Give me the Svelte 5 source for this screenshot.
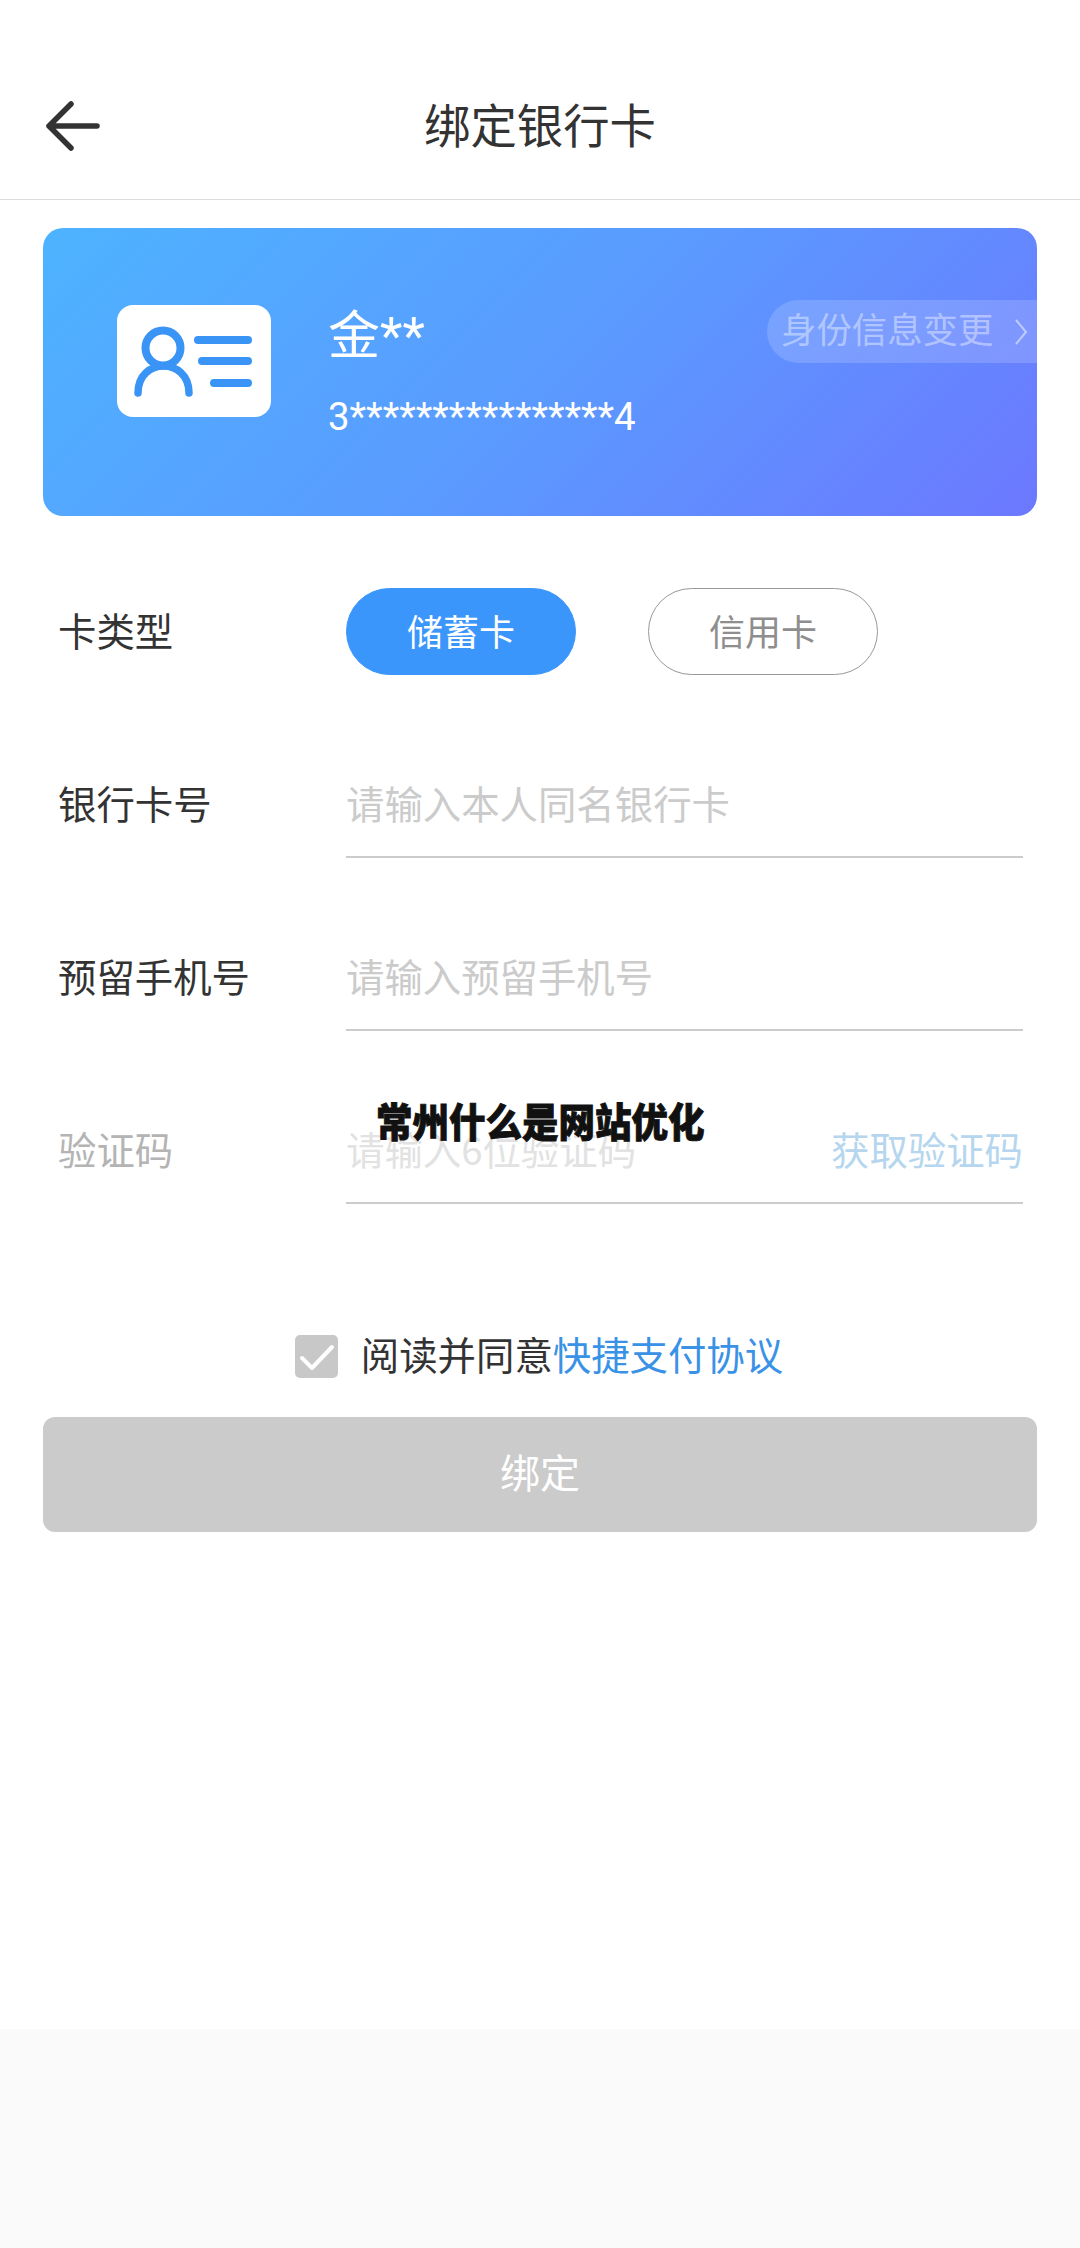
<script>
  const rows = [
    { label: '银行卡号', hint: '请输入本人同名银行卡' },
    { label: '预留手机号', hint: '请输入预留手机号' }
  ];
</script>

<div class="page">
  <header class="nav">
    <svg class="back" viewBox="0 0 56 50" width="56" height="50" aria-hidden="true">
      <path d="M25 3 L3 25 L25 47 M3 25 H51" fill="none" stroke="#333" stroke-width="5.5" stroke-linecap="round" stroke-linejoin="round" />
    </svg>
    <h1>绑定银行卡</h1>
  </header>

  <main class="content">
    <section class="card">
      <div class="id-icon">
        <svg viewBox="0 0 154 112" width="154" height="112" aria-hidden="true">
          <g fill="none" stroke="#3a94f6" stroke-linecap="round">
            <circle cx="46" cy="43" r="17.5" stroke-width="8" />
            <path d="M21 88 C21 52 72 52 72 88" stroke-width="7.5" />
            <path d="M81 35 H131 M85 56 H131 M97 78 H131" stroke-width="8" />
          </g>
        </svg>
      </div>
      <div class="holder">
        <div class="name">金**</div>
        <div class="number">3****************4</div>
      </div>
      <div class="change">
        <span>身份信息变更</span>
        <svg viewBox="0 0 14 28" width="14" height="28" aria-hidden="true">
          <path d="M2 2 L12 14 L2 26" fill="none" stroke="#fff" stroke-opacity=".5" stroke-width="2" />
        </svg>
      </div>
    </section>

    <div class="row type-row">
      <div class="label">卡类型</div>
      <div class="pills">
        <div class="pill active">储蓄卡</div>
        <div class="pill">信用卡</div>
      </div>
    </div>

    {#each rows as row}
      <div class="row">
        <div class="label">{row.label}</div>
        <div class="field"><span class="hint">{row.hint}</span></div>
      </div>
    {/each}

    <div class="row">
      <div class="label faded">验证码</div>
      <div class="field">
        <span class="hint faint">请输入6位验证码</span>
        <span class="get-code">获取验证码</span>
      </div>
    </div>

    <div class="agree">
      <span class="check">
        <svg viewBox="0 0 43 43" width="43" height="43" aria-hidden="true">
          <path d="M7 23 L17 33 L37 12" fill="none" stroke="#fff" stroke-width="4" stroke-linecap="round" stroke-linejoin="round" />
        </svg>
      </span>
      <span class="agree-text">阅读并同意<span class="link">快捷支付协议</span></span>
    </div>

    <button class="submit" type="button">绑定</button>
  </main>

  <div class="spacer"></div>
  <div class="foot"></div>

  <div class="watermark">常州什么是网站优化</div>
</div>

<style>
  :global(body) {
    margin: 0;
    background: #fff;
  }

  .page {
    position: relative;
    width: 1080px;
    height: 2248px;
    display: flex;
    flex-direction: column;
    overflow: hidden;
    font-family: "Noto Sans CJK SC", "Noto Sans", sans-serif;
    color: #333;
  }

  .nav {
    box-sizing: border-box;
    height: 200px;
    padding-top: 48px;
    display: flex;
    align-items: center;
    justify-content: center;
    position: relative;
    border-bottom: 1px solid #dcdcdc;
    flex: none;
  }

  .back {
    position: absolute;
    left: 46px;
    top: 101px;
  }

  h1 {
    margin: 0;
    font-size: 46.4px;
    font-weight: 400;
    line-height: 1;
    color: #333;
  }

  .content {
    padding: 28px 43px 0;
    flex: none;
  }

  .card {
    box-sizing: border-box;
    height: 288px;
    border-radius: 20px;
    background: linear-gradient(135deg, #4db3ff 0%, #5a9bff 50%, #6c78ff 100%);
    display: flex;
    align-items: center;
    padding-left: 74px;
    position: relative;
    color: #fff;
  }

  .id-icon {
    width: 154px;
    height: 112px;
    border-radius: 16px;
    background: #fff;
    margin-top: -23px;
    flex: none;
  }

  .id-icon svg {
    display: block;
  }

  .holder {
    margin-left: 57px;
    margin-top: -3px;
  }

  .name {
    font-family: Roboto, "Noto Sans CJK SC", sans-serif;
    font-size: 52px;
    line-height: 70px;
  }

  .number {
    font-family: Roboto, "Noto Sans", sans-serif;
    font-size: 38.4px;
    line-height: 46px;
    margin-top: 22px;
  }

  .change {
    position: absolute;
    right: 0;
    top: 72px;
    box-sizing: border-box;
    width: 270px;
    height: 63px;
    border-radius: 32px 0 0 32px;
    background: rgba(255, 255, 255, 0.16);
    display: flex;
    align-items: center;
    padding-left: 14px;
    gap: 21px;
    font-size: 35.4px;
    color: rgba(255, 255, 255, 0.42);
  }

  .change span {
    margin-top: -8px;
  }

  .row {
    box-sizing: border-box;
    height: 173px;
    display: flex;
    align-items: flex-start;
    padding-left: 15px;
  }

  .type-row {
    margin-top: 72px;
  }

  .label {
    width: 288px;
    flex: none;
    font-size: 38.4px;
    line-height: 83px;
    color: #333;
  }

  .label.faded {
    color: #b4b4b4;
  }

  .pills {
    display: flex;
    gap: 72px;
  }

  .pill {
    box-sizing: border-box;
    width: 230px;
    height: 87px;
    padding-bottom: 3px;
    border-radius: 44px;
    border: 1px solid #999;
    display: flex;
    align-items: center;
    justify-content: center;
    font-size: 36px;
    color: #8e8e8e;
  }

  .pill.active {
    background: #3a96fb;
    border-color: #3a96fb;
    color: #fff;
  }

  .field {
    box-sizing: border-box;
    width: 677px;
    height: 97px;
    border-bottom: 2px solid #ccc;
    display: flex;
    justify-content: space-between;
    align-items: flex-start;
    font-size: 38.4px;
    line-height: 83px;
  }

  .hint {
    color: #cbcbcb;
  }

  .hint.faint {
    color: #e2e2e2;
  }

  .get-code {
    color: #b5d6ee;
  }

  .agree {
    display: flex;
    align-items: center;
    justify-content: center;
    gap: 23px;
    margin-top: 51px;
    height: 50px;
    padding-right: 2px;
  }

  .check {
    width: 43px;
    height: 43px;
    border-radius: 5px;
    background: #c8c8c8;
    flex: none;
  }

  .check svg {
    display: block;
  }

  .agree-text {
    font-size: 38.4px;
    line-height: 50px;
    color: #333;
    margin-top: -7px;
  }

  .link {
    color: #3a92e6;
  }

  .submit {
    display: block;
    width: 100%;
    height: 115px;
    margin-top: 36px;
    border: 0;
    border-radius: 12px;
    background: #cbcbcb;
    color: #fff;
    font-family: inherit;
    font-size: 40px;
    padding: 0 0 8px;
  }

  .spacer {
    flex: 1;
  }

  .foot {
    height: 219px;
    background: #fafafa;
    flex: none;
  }

  .watermark {
    position: absolute;
    left: 376px;
    top: 1097px;
    font-size: 36.5px;
    line-height: 48px;
    font-weight: 900;
    color: #111;
    white-space: nowrap;
    -webkit-text-stroke: 0.8px #111;
    transform: scaleY(1.08);
  }
</style>
